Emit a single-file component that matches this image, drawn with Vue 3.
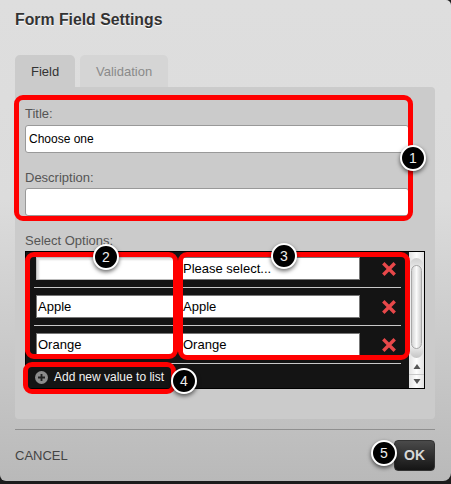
<script setup>
const rows = [
  { value: '', label: 'Please select...' },
  { value: 'Apple', label: 'Apple' },
  { value: 'Orange', label: 'Orange' }
];

const marks = [
  { n: 1, cls: 'm1' },
  { n: 2, cls: 'm2' },
  { n: 3, cls: 'm3' },
  { n: 4, cls: 'm4' },
  { n: 5, cls: 'm5' }
];
</script>

<template>
  <div class="page">
    <div class="dialog">
      <h1 class="title">Form Field Settings</h1>

      <div class="tabs">
        <div class="tab active">Field</div>
        <div class="tab">Validation</div>
      </div>

      <div class="panel">
        <label class="label first">Title:</label>
        <input class="text" type="text" value="Choose one" />
        <label class="label second">Description:</label>
        <input class="text" type="text" value="" />
        <label class="label third">Select Options:</label>

        <div class="list">
          <div class="list-body">
            <div v-for="row in rows" :key="row.label" class="row">
              <input class="cell left" :class="{ empty: !row.value }" type="text" :value="row.value" />
              <input class="cell right" type="text" :value="row.label" />
              <svg class="remove" width="14" height="14" viewBox="0 0 14 14">
                <path d="M2.5 2.5 L11.5 11.5 M11.5 2.5 L2.5 11.5" stroke="#e8484a" stroke-width="3.4" stroke-linecap="square" fill="none" />
              </svg>
            </div>
            <div class="add">
              <svg width="13" height="13" viewBox="0 0 14 14">
                <circle cx="7" cy="7" r="7" fill="#8c8c8c" />
                <path d="M7 3.2 V10.8 M3.2 7 H10.8" stroke="#222" stroke-width="2" />
              </svg>
              <span>Add new value to list</span>
            </div>
          </div>
          <div class="scroll">
            <div class="track">
              <div class="thumb"></div>
            </div>
            <div class="arrows">
              <div class="arrow">
                <svg width="8" height="7" viewBox="0 0 8 7"><path d="M4 1 L7.5 6 H0.5 Z" fill="#555" /></svg>
              </div>
              <div class="arrow">
                <svg width="8" height="7" viewBox="0 0 8 7"><path d="M0.5 1 H7.5 L4 6 Z" fill="#555" /></svg>
              </div>
            </div>
          </div>
        </div>
      </div>

      <div class="footer">
        <span class="cancel">CANCEL</span>
        <button class="ok">OK</button>
      </div>
    </div>

    <div class="outline o1"></div>
    <div class="outline o2"></div>
    <div class="outline o3"></div>
    <div class="outline o4"></div>
    <div v-for="m in marks" :key="m.n" class="mark" :class="m.cls">{{ m.n }}</div>
  </div>
</template>

<style>
html, body {
  margin: 0;
  background: #1c1c1c;
}
</style>

<style scoped>
.page {
  position: relative;
  width: 451px;
  height: 484px;
  overflow: hidden;
  font-family: "Liberation Sans", Arial, sans-serif;
  background: #1c1c1c;
}

.dialog {
  box-sizing: border-box;
  width: 451px;
  height: 481px;
  padding: 0 16px 0 15px;
  border-radius: 0 5px 8px 6px;
  background: linear-gradient(#dedede 0, #dcdcdc 200px, #b9b9b9 100%);
  overflow: hidden;
}

.title {
  margin: 0;
  padding-top: 11px;
  height: 44px;
  box-sizing: border-box;
  font-size: 15.8px;
  line-height: 17px;
  font-weight: bold;
  color: #333;
  text-shadow: 0 1px 1px #fff;
}

.tabs {
  display: flex;
  gap: 5px;
  height: 32px;
  margin-top: 11px;
}

.tab {
  box-sizing: border-box;
  height: 32px;
  padding: 9px 16px 0;
  width: 88px;
  text-align: center;
  font-size: 13px;
  line-height: 15px;
  color: #8a8a8a;
  background: #d5d5d5;
  border-radius: 5px 5px 0 0;
}

.tab.active {
  width: 60px;
  color: #333;
  background: #cbcbcb;
}

.panel {
  box-sizing: border-box;
  height: 332px;
  padding: 19px 11px 0 10px;
  background: #cbcbcb;
  border-radius: 0 4px 4px 4px;
}

.label {
  display: block;
  height: 15px;
  font-size: 13px;
  line-height: 15px;
  color: #555;
}

.label.first {
  margin-bottom: 4px;
}

.label.second {
  margin-top: 17px;
  margin-bottom: 3px;
}

.label.third {
  margin-top: 17px;
  margin-bottom: 3px;
}

.text {
  display: block;
  box-sizing: border-box;
  width: 384px;
  height: 28px;
  padding: 0 3px;
  margin: 0;
  border: 1px solid #999;
  border-radius: 3px;
  background: #fff;
  font-family: inherit;
  font-size: 12px;
  color: #000;
  outline: none;
}

.list {
  display: flex;
  box-sizing: border-box;
  width: 400px;
  height: 138px;
  border: 1px solid #000;
  background: #141414;
  overflow: hidden;
}

.list-body {
  width: 383px;
  margin-top: -2px;
}

.row {
  display: flex;
  align-items: center;
  box-sizing: border-box;
  width: 367px;
  height: 38px;
  margin-left: 8px;
  padding-left: 2px;
  border-bottom: 1px solid #c8c8c8;
}

.cell {
  box-sizing: border-box;
  height: 23px;
  margin: 0;
  padding: 0 1px;
  border: 1px solid #777;
  background: #fff;
  font-family: inherit;
  font-size: 13px;
  color: #000;
  outline: none;
  border-radius: 0;
}

.cell.left {
  width: 139px;
  margin-right: 6px;
}

.cell.left.empty {
  border-color: #bbb;
  box-shadow: inset 2px 2px 2px #ddd;
}

.cell.right {
  width: 179px;
}

.remove {
  margin-left: 22px;
}

.add {
  display: flex;
  align-items: center;
  gap: 6px;
  height: 26px;
  padding-left: 9px;
  font-size: 12px;
  color: #f2f2f2;
}

.scroll {
  display: flex;
  flex-direction: column;
  width: 15px;
  background: linear-gradient(90deg, #e2e2e2, #fdfdfd 50%, #e2e2e2);
}

.track {
  box-sizing: border-box;
  height: 100px;
  margin: 6px 1px 0;
  padding: 7px 0 9px;
  border-radius: 7px;
  background: linear-gradient(#d0d0d0, #ededed 12%, #ededed 88%, #c4c4c4);
}

.thumb {
  box-sizing: border-box;
  height: 100%;
  margin: 0 1px;
  border: 1px solid #a8a8a8;
  border-radius: 6px;
  background: linear-gradient(90deg, #d4d4d4, #fafafa 50%, #d0d0d0);
}

.arrows {
  flex: 1;
  margin-top: 1px;
}

.arrow {
  display: flex;
  align-items: center;
  justify-content: center;
  height: 12px;
  padding-bottom: 1px;
}

.arrow:first-child {
  height: 14px;
  border-bottom: 1px solid #c8c8c8;
}

.footer {
  display: flex;
  align-items: center;
  justify-content: space-between;
  box-sizing: border-box;
  height: 52px;
  margin-top: 10px;
  padding: 10px 0 11px;
  border-top: 1px solid #8f8f8f;
}

.cancel {
  font-size: 13px;
  color: #444;
}

.ok {
  width: 41px;
  height: 31px;
  padding: 0;
  border: 1px solid #333;
  border-radius: 4px;
  background: linear-gradient(#4a4a4a, #151515);
  font-family: inherit;
  font-size: 14px;
  font-weight: bold;
  color: #d8d8d8;
}

.outline {
  position: absolute;
  box-sizing: border-box;
  border: 5px solid #f00;
  border-radius: 9px;
}

.o1 {
  left: 14px;
  top: 95px;
  width: 399px;
  height: 126px;
}

.o2 {
  left: 25px;
  top: 252px;
  width: 153px;
  height: 107px;
}

.o3 {
  left: 178px;
  top: 252px;
  width: 232px;
  height: 108px;
}

.o4 {
  left: 23px;
  top: 362px;
  width: 153px;
  height: 32px;
}

.mark {
  position: absolute;
  box-sizing: border-box;
  width: 26px;
  height: 26px;
  border: 2px solid #fff;
  border-radius: 50%;
  background: #000;
  color: #eee;
  font-size: 14px;
  line-height: 22px;
  text-align: center;
  box-shadow: 0 2px 4px rgba(0, 0, 0, 0.6);
}

.m1 {
  left: 400px;
  top: 145px;
}

.m2 {
  left: 93px;
  top: 244px;
}

.m3 {
  left: 271px;
  top: 243px;
}

.m4 {
  left: 171px;
  top: 368px;
}

.m5 {
  left: 371px;
  top: 440px;
}
</style>
